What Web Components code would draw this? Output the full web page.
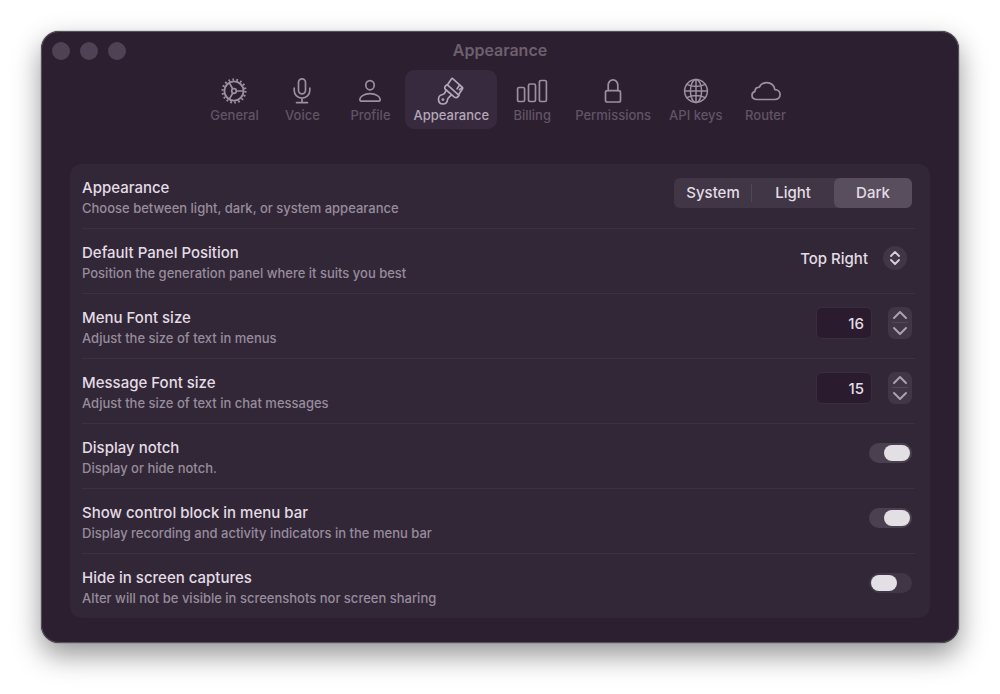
<!DOCTYPE html>
<html lang="en">
<head>
<meta charset="utf-8">
<meta name="viewport" content="width=device-width, initial-scale=1">
<title>Appearance</title>
<style>
  :root {
    --window: #2c1f30;
    --card: #322737;
    --line: #3b3141;
    --text: #e3dce5;
    --hint: #978c9c;
    --control: #403646;
  }
  body {
    margin: 0;
    padding: 31px 41px 51px;
    background: #fff;
    font-family: Inter, "Liberation Sans", sans-serif;
    color: var(--text);
  }
</style>
</head>
<body>
<settings-window>
  <span slot="title">Appearance</span>
  <tab-bar slot="tabs">
    <tab-item icon="gear">General</tab-item>
    <tab-item icon="mic">Voice</tab-item>
    <tab-item icon="person">Profile</tab-item>
    <tab-item icon="brush" selected>Appearance</tab-item>
    <tab-item icon="bars">Billing</tab-item>
    <tab-item icon="lock">Permissions</tab-item>
    <tab-item icon="globe">API keys</tab-item>
    <tab-item icon="cloud">Router</tab-item>
  </tab-bar>
  <choice-row options="System,Light,Dark" value="Dark">Appearance<span slot="hint">Choose between light, dark, or system appearance</span></choice-row>
  <select-row options="Top Right,Top Left" value="Top Right">Default Panel Position<span slot="hint">Position the generation panel where it suits you best</span></select-row>
  <stepper-row value="16">Menu Font size<span slot="hint">Adjust the size of text in menus</span></stepper-row>
  <stepper-row value="15">Message Font size<span slot="hint">Adjust the size of text in chat messages</span></stepper-row>
  <toggle-row checked>Display notch<span slot="hint">Display or hide notch.</span></toggle-row>
  <toggle-row checked>Show control block in menu bar<span slot="hint">Display recording and activity indicators in the menu bar</span></toggle-row>
  <toggle-row>Hide in screen captures<span slot="hint">Alter will not be visible in screenshots nor screen sharing</span></toggle-row>
</settings-window>

<script>
  // 28x28 line icons
  const ICONS = {
    gear: `<circle cx="14" cy="14" r="9.6" stroke-width="1.9"/><circle cx="14" cy="14" r="2.3"/>
      <path d="M16.3 14H23.6M12.8 12 9.2 5.7M12.8 16 9.2 22.3"/>
      <circle cx="14" cy="14" r="11.5" stroke-width="2.2" stroke-dasharray="1.7 2.314"/>`,
    mic: `<rect x="10.5" y="1.8" width="7" height="15" rx="3.5"/>
      <path d="M6.2 11v2.600a7.800 7.600 0 0 0 15.600 0V11M14 21.200v4.400M8.500 25.600h11"/>`,
    person: `<ellipse cx="14" cy="8.200" rx="4.200" ry="4.600"/>
      <path d="M6 24.200c-1.500 0-2.200-.6-2.200-1.700 0-2.500 3.900-5.900 10.200-5.900s10.200 3.400 10.200 5.900c0 1.100-.7 1.700-2.200 1.700z"/>`,
    brush: `<path d="M10.300 8 14.600 1.700c.3-.5.700-.5 1.100-.1l9.700 8.700c.5.500.5 1 .1 1.500l-3.900 5.900"/>
      <path d="m22.600 8-2.500 3.800M25 10.600l-2.500 2"/>
      <path d="M8.600 8.800c-1.200 1.300-1.200 2.600 0 3.700l8.500 7.300c1.400 1.100 2.900 1 3.900-.2l1-1.200L10.400 7.800z"/>
      <path d="m9.200 13.200-1.500 3c-.4.800-1 1.100-2 1.300-2.700.5-4.300 2.500-4.200 5 .1 2.800 2 4.500 4.500 4.500 2.700 0 4.300-1.700 4.500-4.200.1-1 .4-1.600 1.100-2.200l2.600-2.400"/>
      <circle cx="5.900" cy="22.600" r=".6"/>`,
    bars: `<rect x="-.4" y="10.500" width="7" height="14" rx="1.500"/>
      <rect x="10.500" y="7" width="7" height="17.500" rx="1.500"/>
      <rect x="21.400" y="3.500" width="7" height="21" rx="1.500"/>`,
    lock: `<rect x="6.500" y="13.600" width="15" height="11.400" rx="1.800"/>
      <path d="M9.200 13.600V8.200a4.800 5.400 0 0 1 9.600 0v5.400"/>`,
    globe: `<circle cx="14" cy="14" r="11.400"/><ellipse cx="14" cy="14" rx="5.600" ry="11.400"/>
      <path d="M14 2.600v22.800M2.600 14h22.800M4.800 7.400c5.400 2.700 13 2.700 18.400 0M4.800 20.600c5.400-2.700 13-2.700 18.400 0"/>`,
    cloud: `<path d="M5.200 22.500h17.600c3.200 0 5.300-2.100 5.300-4.900s-2.200-4.900-5.200-5c-.4-4.300-4-7-8.200-7-3.300 0-6 1.700-7.300 4.600-2.900.1-4.400 1.800-4.500 4.200C1 15.200 0 16.500 0 18.200c0 2.400 1.900 4.300 5.200 4.300z"/>`
  };

  class SettingsWindow extends HTMLElement {
    constructor() {
      super();
      this.attachShadow({ mode: "open" });
      this.shadowRoot.innerHTML = `
        <style>
          :host {
            display: block;
            border: 1px solid #57505d;
            border-radius: 18px;
            padding: 0 28px 24px;
            background: var(--window);
            box-shadow: 0 12px 28px rgba(0, 0, 0, 0.42), 0 0 1px #000;
          }
          header {
            display: grid;
            grid-template-columns: 1fr auto 1fr;
            align-items: center;
            height: 38px;
            margin: 0 -18px;
          }
          .lights {
            display: flex;
            gap: 10px;
          }
          .lights button {
            width: 18px;
            height: 18px;
            padding: 0;
            border: 0;
            border-radius: 50%;
            background: #4f4255;
          }
          h1 {
            margin: 0;
            padding-bottom: 2px;
            font-size: 16px;
            line-height: 20px;
            font-weight: 600;
            color: #6c606f;
          }
          main {
            margin-top: 35px;
            border-radius: 12px;
            background: var(--card);
          }
        </style>
        <header>
          <div class="lights">
            <button aria-label="Close"></button>
            <button aria-label="Minimize"></button>
            <button aria-label="Zoom"></button>
          </div>
          <h1><slot name="title"></slot></h1>
        </header>
        <slot name="tabs"></slot>
        <main><slot></slot></main>`;
    }
  }

  class TabBar extends HTMLElement {
    constructor() {
      super();
      this.attachShadow({ mode: "open" });
      this.shadowRoot.innerHTML = `
        <style>
          :host { display: block; }
          nav {
            display: flex;
            justify-content: center;
            gap: 2px;
          }
        </style>
        <nav><slot></slot></nav>`;
    }
  }

  class TabItem extends HTMLElement {
    connectedCallback() {
      this.attachShadow({ mode: "open" });
      this.shadowRoot.innerHTML = `
        <style>
          :host { display: block; }
          button {
            display: flex;
            flex-direction: column;
            align-items: center;
            gap: 1px;
            min-width: 66px;
            height: 59px;
            padding: 7px 8px;
            border: 0;
            border-radius: 9px;
            background: none;
            font: 500 13px/18px Inter, "Liberation Sans", sans-serif;
            color: #615466;
          }
          svg {
            width: 28px;
            height: 28px;
            overflow: visible;
            fill: none;
            stroke: #9c8fa1;
            stroke-width: 1.7;
            stroke-linecap: round;
            stroke-linejoin: round;
          }
          :host([icon="gear"]) svg { stroke-linecap: butt; }
          :host([icon="globe"]) svg { stroke-width: 1.5; }
          :host([selected]) button {
            background: #37293e;
            color: #b3a7b7;
          }
          :host([selected]) svg { stroke: #b3a7b7; }
        </style>
        <button>
          <svg viewBox="0 0 28 28" aria-hidden="true">${ICONS[this.getAttribute("icon")]}</svg>
          <slot></slot>
        </button>`;
    }
  }

  /**
   * Base row: label and hint on the left, control on the right.
   * Subclasses return their markup and styles.
   */
  class SettingRow extends HTMLElement {
    connectedCallback() {
      this.attachShadow({ mode: "open" });
      this.shadowRoot.innerHTML = `
        <style>
          :host {
            display: block;
            padding: 0 15px 0 12px;
          }
          .row {
            display: flex;
            box-sizing: border-box;
            align-items: center;
            justify-content: space-between;
            height: 65px;
            padding: 0 3px 6px 0;
            border-bottom: 1px solid var(--line);
          }
          :host(:last-child) .row {
            height: 64px;
            border: 0;
          }
          .text { padding-top: 9px; }
          .name {
            display: block;
            font-size: 15px;
            line-height: 20px;
            font-weight: 500;
          }
          p {
            margin: 0;
            font-size: 13px;
            line-height: 20px;
            font-weight: 500;
            color: var(--hint);
          }
          input, select, button {
            margin: 0;
            font-family: inherit;
            color: inherit;
          }
          ${this.css()}
        </style>
        <div class="row">
          <div class="text">
            <label class="name" id="name" for="control"><slot></slot></label>
            <p><slot name="hint"></slot></p>
          </div>
          ${this.control()}
        </div>`;
      this.ready();
    }
    css() { return ""; }
    control() { return ""; }
    ready() {}
  }

  class ChoiceRow extends SettingRow {
    css() {
      return `
        .group {
          display: grid;
          grid-template-columns: repeat(3, 78px);
          gap: 2px;
          height: 30px;
          border-radius: 6px;
          background: var(--control);
        }
        .group label {
          display: grid;
          place-items: center;
          border-radius: 6px;
          font-size: 15px;
          line-height: 20px;
          font-weight: 500;
        }
        .group label:first-child {
          border-radius: 0;
          background: linear-gradient(#514757, #514757) right center / 1px 18px no-repeat;
        }
        .group label:has(:checked) { background: #594e5e; }
        input {
          grid-area: 1 / 1;
          appearance: none;
        }
        span { grid-area: 1 / 1; }`;
    }
    control() {
      const value = this.getAttribute("value");
      const items = this.getAttribute("options").split(",").map((name, i) => `
        <label><input type="radio" name="choice" ${i === 0 ? 'id="control"' : ""} ${name === value ? "checked" : ""}><span>${name}</span></label>`);
      return `<div class="group" role="radiogroup" aria-labelledby="name">${items.join("")}</div>`;
    }
  }

  class SelectRow extends SettingRow {
    css() {
      return `
        .pick {
          display: grid;
          align-items: center;
          justify-items: end;
          padding-right: 5px;
        }
        select {
          grid-area: 1 / 1;
          appearance: none;
          height: 24px;
          padding: 0 39px 0 0;
          border: 0;
          background: none;
          font-size: 15px;
          font-weight: 500;
          text-align-last: right;
        }
        svg {
          grid-area: 1 / 1;
          width: 24px;
          height: 24px;
          border-radius: 50%;
          background: var(--control);
          fill: none;
          stroke: #d8d0db;
          stroke-width: 1.8;
          stroke-linecap: round;
          stroke-linejoin: round;
          pointer-events: none;
        }`;
    }
    control() {
      const items = this.getAttribute("options").split(",").map((name) => `<option>${name}</option>`);
      return `
        <div class="pick">
          <select id="control">${items.join("")}</select>
          <svg viewBox="0 0 24 24" aria-hidden="true"><path d="M8 10l4-4 4 4M8 14l4 4 4-4"/></svg>
        </div>`;
    }
    ready() {
      this.shadowRoot.querySelector("select").value = this.getAttribute("value");
    }
  }

  class StepperRow extends SettingRow {
    css() {
      return `
        .stepper {
          display: flex;
          gap: 16px;
        }
        input {
          box-sizing: border-box;
          width: 56px;
          height: 32px;
          padding: 0 7px;
          border: 1px solid #382e3f;
          border-radius: 6px;
          background: #2a1c2e;
          font-size: 15px;
          font-weight: 500;
          text-align: right;
          appearance: textfield;
        }
        input::-webkit-inner-spin-button { appearance: none; }
        .buttons {
          display: grid;
          grid-template-rows: 1fr 1fr;
          width: 24px;
          height: 32px;
          border-radius: 7px;
          background: var(--control);
        }
        button {
          display: grid;
          place-items: center;
          padding: 0;
          border: 0;
          background: none;
        }
        .up {
          background: linear-gradient(#53485a, #53485a) center bottom / 16px 1px no-repeat;
        }
        svg {
          width: 24px;
          height: 16px;
          fill: none;
          stroke: #aaa0ae;
          stroke-width: 2;
          stroke-linecap: round;
          stroke-linejoin: round;
        }`;
    }
    control() {
      return `
        <div class="stepper">
          <input id="control" type="number" value="${this.getAttribute("value")}">
          <div class="buttons">
            <button class="up" aria-label="Increase"><svg viewBox="0 0 24 16"><path d="M6 11l6-6 6 6"/></svg></button>
            <button class="down" aria-label="Decrease"><svg viewBox="0 0 24 16"><path d="M6 5l6 6 6-6"/></svg></button>
          </div>
        </div>`;
    }
    ready() {
      const input = this.shadowRoot.querySelector("input");
      this.shadowRoot.querySelector(".up").onclick = () => input.stepUp();
      this.shadowRoot.querySelector(".down").onclick = () => input.stepDown();
    }
  }

  class ToggleRow extends SettingRow {
    css() {
      return `
        input {
          appearance: none;
          display: flex;
          box-sizing: border-box;
          width: 43px;
          height: 20px;
          padding: 2px;
          border-radius: 10px;
          background: var(--control);
        }
        input::before {
          content: "";
          width: 26px;
          height: 16px;
          border-radius: 8px;
          background: #e2e0e4;
        }
        input:checked {
          justify-content: flex-end;
          background: #4a404f;
        }`;
    }
    control() {
      return `<input id="control" type="checkbox" ${this.hasAttribute("checked") ? "checked" : ""}>`;
    }
  }

  customElements.define("settings-window", SettingsWindow);
  customElements.define("tab-bar", TabBar);
  customElements.define("tab-item", TabItem);
  customElements.define("choice-row", ChoiceRow);
  customElements.define("select-row", SelectRow);
  customElements.define("stepper-row", StepperRow);
  customElements.define("toggle-row", ToggleRow);
</script>
</body>
</html>
